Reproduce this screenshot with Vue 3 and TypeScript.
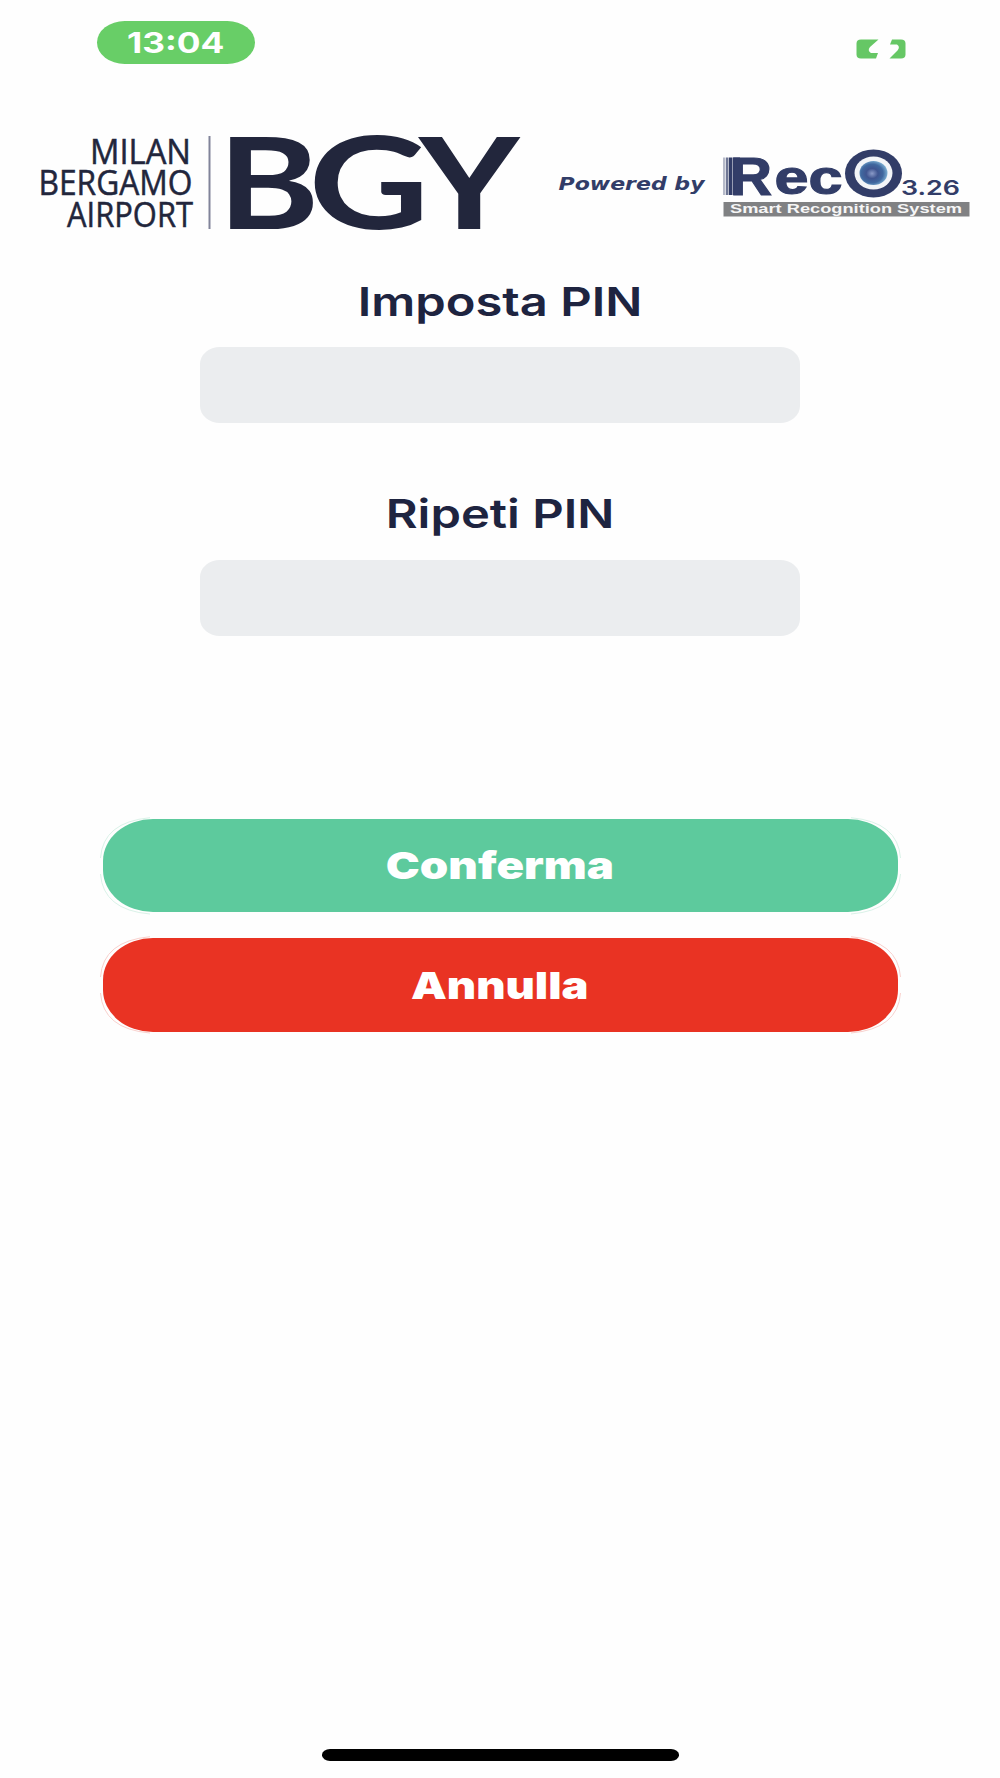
<script setup lang="ts">
import { ref } from 'vue'

const pin = ref<string>('')
const repeatedPin = ref<string>('')

// Corner arcs of the thin outline around each button
const outline =
  'M.5 41Q3 5 50 .7M751 .7Q798 5 800.5 41M800.5 57Q798 93 751 97M50 97Q3 93 .5 57'

function reset(): void {
  pin.value = ''
  repeatedPin.value = ''
}
</script>

<template>
  <main class="screen">
    <header class="status">
      <div class="clock"><span>13:04</span></div>
      <svg class="battery" width="50" height="20" viewBox="0 0 50 20" aria-label="Charging">
        <path d="M5 .5H22.500L14 8Q11 11.500 15 14H22L20 19.500H5Q.5 19.500 .5 15.500V4.500Q.5 .5 5 .5Z" />
        <path d="M36 .5H45Q49.500 .5 49.500 4.500V15.500Q49.500 19.500 45 19.500H33.500L41.500 11.500Q44.500 7.500 41 5.500H34Z" />
      </svg>
    </header>

    <div class="brands">
      <svg class="airport" width="500" height="110" viewBox="30 130 500 110">
        <g class="airport-name">
          <text x="90" y="163.500" textLength="101" lengthAdjust="spacingAndGlyphs">MILAN</text>
          <text x="38.500" y="195" textLength="154" lengthAdjust="spacingAndGlyphs">BERGAMO</text>
          <text x="67" y="226.500" textLength="126" lengthAdjust="spacingAndGlyphs">AIRPORT</text>
        </g>
        <rect x="208.500" y="136" width="2" height="93" fill="#81849a" />
        <g class="airport-code">
          <text x="216" y="228.800" textLength="105" lengthAdjust="spacingAndGlyphs">B</text>
          <text class="round" x="308.500" y="228.800" textLength="121" lengthAdjust="spacingAndGlyphs">G</text>
          <text x="418" y="228.800" textLength="102.500" lengthAdjust="spacingAndGlyphs">Y</text>
        </g>
      </svg>
      <svg class="reco" width="430" height="110" viewBox="540 130 430 110">
        <defs>
          <radialGradient id="lens" cx=".45" cy=".52" r=".6">
            <stop offset="0" stop-color="#8b9bc8" />
            <stop offset=".35" stop-color="#3f5590" />
            <stop offset=".65" stop-color="#40689f" />
            <stop offset="1" stop-color="#8fc4e2" />
          </radialGradient>
        </defs>
        <text class="powered" x="558.500" y="189.500" textLength="146" lengthAdjust="spacingAndGlyphs">Powered by</text>
        <g fill="#323d68">
          <rect x="723" y="157.500" width="2.500" height="37.500" opacity=".35" />
          <rect x="726" y="157.500" width="2.500" height="37.500" opacity=".7" />
          <rect x="729" y="157.500" width="3.500" height="37.500" />
          <rect x="733" y="157.500" width="7" height="37.500" />
          <text class="reco-r" x="730" y="194.500" textLength="42" lengthAdjust="spacingAndGlyphs">R</text>
          <text class="reco-ec" x="774.500" y="194" textLength="68" lengthAdjust="spacingAndGlyphs">ec</text>
          <ellipse cx="873.500" cy="173.500" rx="28.500" ry="24" />
          <text class="version" x="901" y="195" textLength="59" lengthAdjust="spacingAndGlyphs">3.26</text>
        </g>
        <ellipse cx="873.500" cy="173" rx="19" ry="16.500" fill="#f3f5f8" />
        <ellipse cx="873.500" cy="173" rx="14" ry="12" fill="url(#lens)" />
        <rect x="723.500" y="202" width="246" height="14.500" fill="#808183" />
        <text class="tagline" x="730" y="212.800" textLength="232" lengthAdjust="spacingAndGlyphs">Smart Recognition System</text>
      </svg>
    </div>

    <form class="form" @submit.prevent>
      <label class="field">
        <span class="label label-set">Imposta PIN</span>
        <input v-model="pin" type="password" inputmode="numeric" />
      </label>
      <label class="field">
        <span class="label label-repeat">Ripeti PIN</span>
        <input v-model="repeatedPin" type="password" inputmode="numeric" />
      </label>
      <div class="actions">
        <button class="confirm" type="submit">
          <svg class="outline" width="801" height="98" viewBox="0 0 801 98"><path :d="outline" /></svg>
          <span class="face"><span class="caption">Conferma</span></span>
        </button>
        <button class="cancel" type="button" @click="reset">
          <svg class="outline" width="801" height="98" viewBox="0 0 801 98"><path :d="outline" /></svg>
          <span class="face"><span class="caption">Annulla</span></span>
        </button>
      </div>
    </form>

    <div class="home-bar"></div>
  </main>
</template>

<style>
body {
  background: #fefefe;
}
</style>

<style scoped>
.screen {
  box-sizing: border-box;
  width: 1000px;
  height: 1778px;
  padding-bottom: 17.500px;
  display: flex;
  flex-direction: column;
  align-items: center;
  background: #fefefe;
  font-family: Inter, "Liberation Sans", sans-serif;
}
.status {
  box-sizing: border-box;
  width: 100%;
  height: 130px;
  padding: 20.500px 94px 0 97px;
  display: flex;
  justify-content: space-between;
  align-items: flex-start;
}
.clock {
  box-sizing: border-box;
  width: 158px;
  height: 43.500px;
  padding-top: 2px;
  border-radius: 28px / 21.750px;
  background: #68ce67;
  color: #fff;
  display: flex;
  align-items: center;
  justify-content: center;
  font-size: 28px;
  font-weight: 650;
}
.clock span {
  transform: scaleX(1.260);
}
.battery {
  margin-top: 18px;
  fill: #66c765;
}
.brands {
  width: 940px;
  height: 110px;
  display: flex;
  gap: 10px;
}
.brands svg {
  flex: none;
  overflow: visible;
}
.airport-name {
  fill: #22263c;
  stroke: #22263c;
  stroke-width: 0.500px;
  font: 400 34.500px "Open Sans", "Noto Sans", sans-serif;
}
.airport-code {
  fill: #22263c;
  font: 600 129px "Noto Sans", "Open Sans", sans-serif;
}
.airport-code .round {
  font: 700 128px Lato, "Noto Sans", sans-serif;
}
.powered {
  fill: #323d68;
  font: italic 700 18px "DejaVu Sans", sans-serif;
}
.reco-r,
.reco-ec {
  stroke: #323d68;
  stroke-width: 1.200px;
}
.reco-r {
  font: 700 53px "Liberation Sans", sans-serif;
}
.reco-ec {
  font: 700 49px "Liberation Sans", sans-serif;
}
.version {
  font: 600 20.500px Inter, sans-serif;
}
.tagline {
  fill: #f6f6f6;
  font: 700 12.500px "Liberation Sans", sans-serif;
}
.form {
  display: flex;
  flex-direction: column;
  align-items: center;
  padding-top: 32px;
}
.field {
  height: 213px;
  display: flex;
  flex-direction: column;
  align-items: center;
}
.label {
  height: 60px;
  line-height: 60px;
  margin-bottom: 14.500px;
  color: #1e2440;
  font-size: 40px;
  font-weight: 600;
  white-space: nowrap;
}
.label-set {
  transform: translateX(-0.500px) scaleX(1.222);
}
.label-repeat {
  transform: translate(0.500px, -1px) scaleX(1.222);
}
input {
  box-sizing: border-box;
  width: 600px;
  height: 76.500px;
  padding: 0 24px;
  border: 0;
  border-radius: 20px / 17px;
  outline: 0;
  background: #ebedef;
  font-size: 36px;
}
.actions {
  display: flex;
  flex-direction: column;
  gap: 22px;
  padding-top: 118.500px;
}
button {
  position: relative;
  box-sizing: border-box;
  width: 801px;
  height: 97.500px;
  padding: 2px 3px;
  border: 0;
  background: none;
  color: #fff;
  font: 900 37.500px Inter, sans-serif;
  display: flex;
}
.outline {
  position: absolute;
  left: 0;
  top: 0;
  fill: none;
  stroke-width: 1px;
  opacity: 0.220;
}
.face {
  flex: 1;
  height: 93.500px;
  border-radius: 50px / 42px;
  display: flex;
  align-items: center;
  justify-content: center;
}
.caption {
  transform: scaleX(1.215);
}
.cancel .caption {
  transform: translateY(0.500px) scaleX(1.205);
}
.confirm .face {
  background: #5dca9d;
}
.confirm .outline {
  stroke: #5dca9d;
}
.cancel .face {
  background: #e93323;
}
.cancel .outline {
  stroke: #e93323;
}
.home-bar {
  width: 357px;
  height: 11.500px;
  margin-top: auto;
  border-radius: 8px / 5.750px;
  background: #000;
}
</style>
